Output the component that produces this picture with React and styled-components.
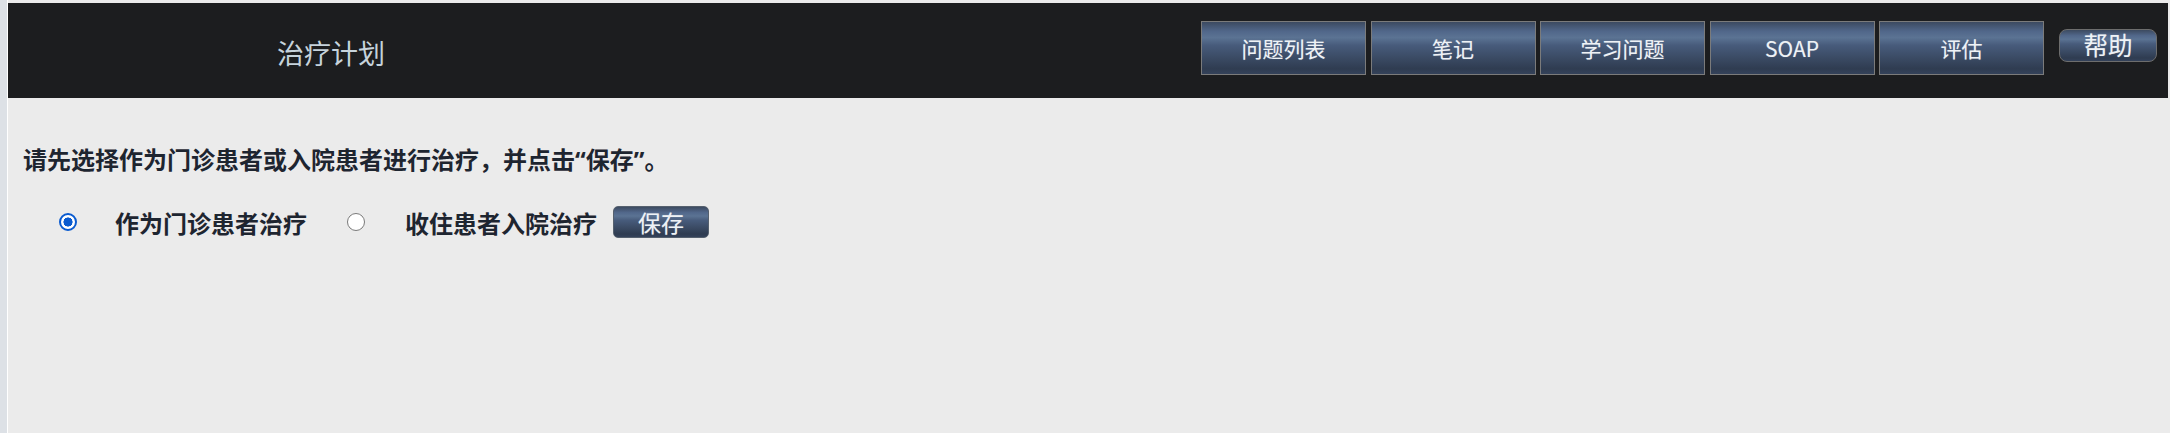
import React, { useState } from "react";
import styled, { createGlobalStyle, css } from "styled-components";

const GlobalStyle = createGlobalStyle`
  html, body { margin: 0; padding: 0; }
  body {
    background: #ebebeb;
    font-family: "Noto Sans CJK SC", "Microsoft YaHei", "Noto Sans", sans-serif;
  }
`;

const Page = styled.div`
  display: flex;
  min-height: 433px;
  background: #ebebeb;
`;

const Strip = styled.div`
  width: 7px;
  flex: none;
  background: #dde1e6;
  border-right: 1px solid #ffffff;
`;

const Main = styled.div`
  flex: 1;
  padding: 3px 2px 0 0;
  display: flex;
  flex-direction: column;
`;

const Header = styled.header`
  height: 95px;
  background: #1c1d1f;
  display: flex;
  justify-content: space-between;
  align-items: flex-start;
  padding-right: 11px;
`;

const Title = styled.h1`
  margin: 0;
  width: 646px;
  height: 95px;
  display: flex;
  align-items: center;
  justify-content: center;
  font-size: 27px;
  font-weight: 400;
  color: #c6d3dc;
  padding-top: 3px;
  box-sizing: border-box;
`;

const Right = styled.div`
  display: flex;
  align-items: flex-start;
`;

const Nav = styled.nav`
  display: flex;
  gap: 4.5px;
  margin-top: 18px;
`;

const gloss = css`
  background: linear-gradient(
    to bottom,
    #3c4a60 0%,
    #51678a 18%,
    #5b7393 30%,
    #475b7b 45%,
    #3a4a63 70%,
    #2f3c51 90%,
    #34425a 100%
  );
  color: #eef2f6;
  font-family: "Noto Sans CJK SC", "Microsoft YaHei", sans-serif;
  cursor: pointer;
  text-shadow: 0 0 1px rgba(255, 255, 255, 0.35);
  padding: 0;
`;

const NavButton = styled.button`
  ${gloss}
  width: 165px;
  height: 54px;
  border: 1px solid #7b7b7b;
  font-size: 21px;
  line-height: 1;
`;

const HelpButton = styled.button`
  ${gloss}
  width: 98px;
  height: 33px;
  margin: 26px 0 0 15px;
  border: 1px solid #6d6d6d;
  border-radius: 8px;
  font-size: 24.5px;
  line-height: 1;
`;

const Content = styled.section`
  padding: 46px 15px 0;
  color: #1e2530;
`;

const Prompt = styled.p`
  margin: 0;
  font-size: 24px;
  line-height: 30px;
  font-weight: 700;
`;

const Quote = styled.span`
  font-family: "Noto Sans", "Open Sans", sans-serif;
  font-weight: 700;
`;

const ChoiceRow = styled.div`
  display: flex;
  align-items: center;
  height: 32px;
  margin-top: 31px;
  padding-left: 36px;
`;

const Radio = styled.input.attrs({ type: "radio" })`
  appearance: none;
  -webkit-appearance: none;
  margin: 0;
  width: 18px;
  height: 18px;
  border-radius: 50%;
  box-sizing: border-box;
  background: #ffffff;
  border: 1px solid #7a7a7a;
  flex: none;
  cursor: pointer;
  &:checked {
    border: 2.5px solid #0a5bd0;
    background: radial-gradient(circle, #0a5bd0 0 4.3px, #ffffff 4.8px);
  }
`;

const Label = styled.label`
  font-size: 24px;
  font-weight: 700;
  margin: 0 ${(p) => p.$after}px 0 ${(p) => p.$before}px;
  white-space: nowrap;
  cursor: pointer;
`;

const SaveButton = styled.button`
  ${gloss}
  width: 96px;
  height: 32px;
  border: 1px solid #55606e;
  border-radius: 5px;
  font-size: 23px;
  line-height: 1;
`;

const tabs = ["问题列表", "笔记", "学习问题", "SOAP", "评估"];

export default function App() {
  const [mode, setMode] = useState("outpatient");
  return (
    <>
      <GlobalStyle />
      <Page>
        <Strip />
        <Main>
          <Header>
            <Title>治疗计划</Title>
            <Right>
              <Nav>
                {tabs.map((t) => (
                  <NavButton key={t}>{t}</NavButton>
                ))}
              </Nav>
              <HelpButton>帮助</HelpButton>
            </Right>
          </Header>
          <Content>
            <Prompt>
              请先选择作为门诊患者或入院患者进行治疗，并点击<Quote>“</Quote>保存
              <Quote>”</Quote>。
            </Prompt>
            <ChoiceRow>
              <Radio
                id="op"
                name="mode"
                checked={mode === "outpatient"}
                onChange={() => setMode("outpatient")}
              />
              <Label htmlFor="op" $before={38} $after={40}>
                作为门诊患者治疗
              </Label>
              <Radio
                id="ip"
                name="mode"
                checked={mode === "inpatient"}
                onChange={() => setMode("inpatient")}
              />
              <Label htmlFor="ip" $before={40} $after={16}>
                收住患者入院治疗
              </Label>
              <SaveButton>保存</SaveButton>
            </ChoiceRow>
          </Content>
        </Main>
      </Page>
    </>
  );
}
